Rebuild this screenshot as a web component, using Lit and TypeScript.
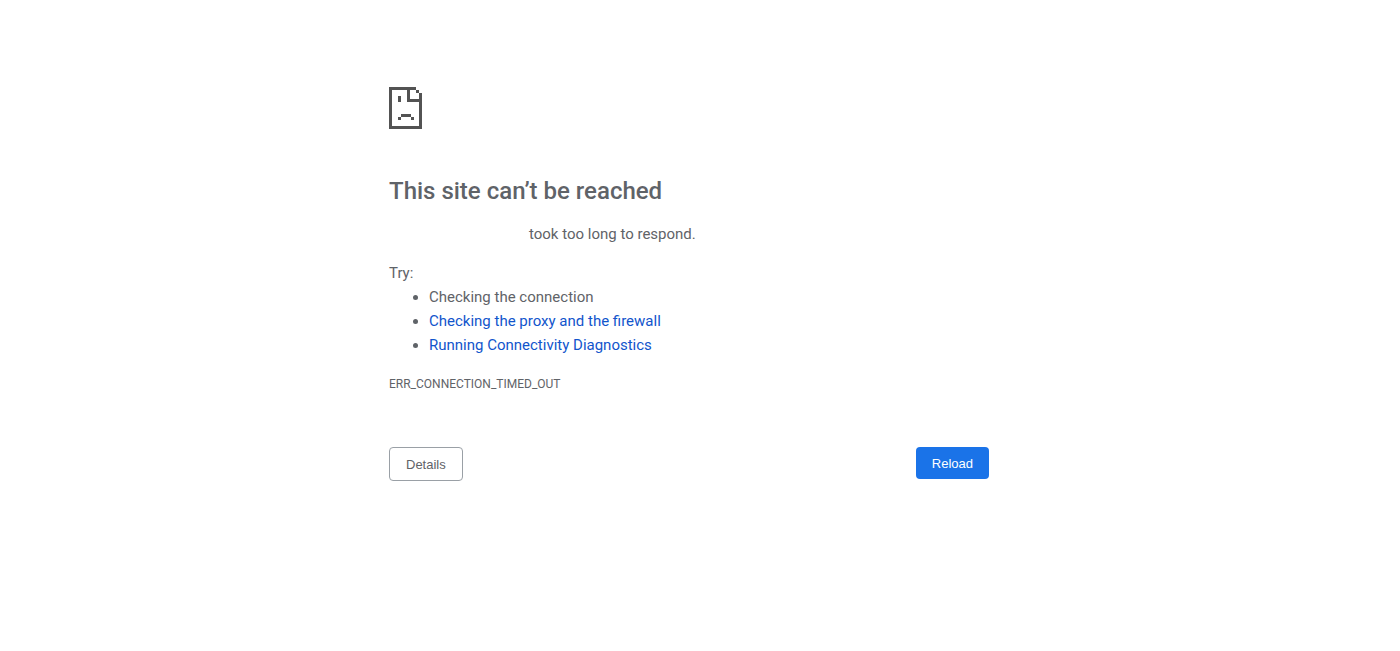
import { LitElement, html, css } from "lit";
import { customElement } from "lit/decorators.js";

@customElement("app-root")
class AppRoot extends LitElement {
  static styles = css`
    :host {
      display: block;
      padding-right: 22px;
      background: #fff;
      color: #5f6368;
      font-family: Roboto, "Liberation Sans", sans-serif;
      font-size: 15px;
      line-height: 24px;
    }
    .page {
      max-width: 600px;
      margin: 0 auto;
      padding-top: 87px;
    }
    .icon {
      display: block;
      width: 33px;
      height: 42px;
      fill: #535353;
    }
    h1 {
      margin: 46px 0 14px;
      font-size: 24px;
      font-weight: 500;
      line-height: 33px;
    }
    p {
      margin: 0;
    }
    .summary {
      padding-left: 140px;
    }
    .try {
      margin-top: 15px;
    }
    ul {
      margin: 0;
      padding-left: 40px;
    }
    a {
      color: #1155cc;
      text-decoration: none;
    }
    .code {
      margin-top: 15px;
      font-size: 12px;
    }
    .actions {
      display: flex;
      justify-content: space-between;
      align-items: flex-start;
      margin-top: 51px;
    }
    button {
      margin: 0;
      padding: 9px 16px 7px;
      border: 0;
      border-radius: 4px;
      font-family: "Liberation Sans", Arial, sans-serif;
      font-size: 13px;
      line-height: 16px;
      cursor: pointer;
    }
    .details {
      border: 1px solid #9aa0a6;
      background: #fff;
      color: #5f6368;
    }
    .reload {
      background: #1a73e8;
      color: #fff;
    }
  `;

  render() {
    return html`
      <main class="page">
        <svg class="icon" viewBox="0 0 33 42" shape-rendering="crispEdges" aria-hidden="true">
          <path
            d="M0 0h27v3H3v36h27V15H18V3h3v9h9V6h3v36H0zM27 3h3v3h-3zM9 9h3v6H9zM12 27h10v3H12zM9 30h3v3H9zM22 30h3v3h-3z"
          />
        </svg>
        <h1>This site can’t be reached</h1>
        <p class="summary">took too long to respond.</p>
        <p class="try">Try:</p>
        <ul>
          <li>Checking the connection</li>
          <li><a href="#proxy">Checking the proxy and the firewall</a></li>
          <li><a href="#diagnostics">Running Connectivity Diagnostics</a></li>
        </ul>
        <p class="code">ERR_CONNECTION_TIMED_OUT</p>
        <div class="actions">
          <button class="details" type="button">Details</button>
          <button class="reload" type="button">Reload</button>
        </div>
      </main>
    `;
  }
}
